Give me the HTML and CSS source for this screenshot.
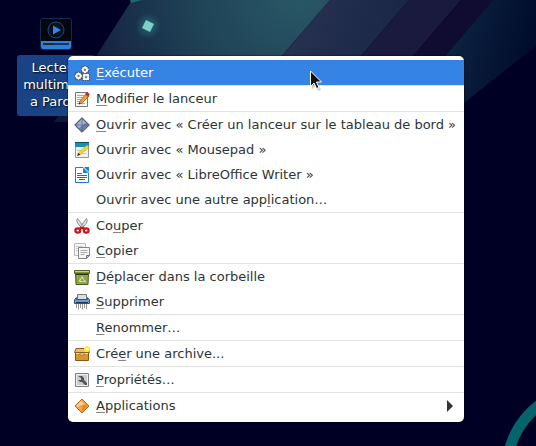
FILE: index.html
```html
<!DOCTYPE html>
<html lang="fr">
<head>
<meta charset="utf-8">
<title>Bureau</title>
<link rel="stylesheet" href="styles.css">
</head>
<body>
<main class="desktop">
  <svg class="wallpaper" viewBox="0 0 536 446" preserveAspectRatio="xMinYMin slice" aria-hidden="true">
    <defs>
      <radialGradient id="teal" gradientUnits="userSpaceOnUse" cx="300" cy="-10" r="230">
        <stop offset="0" stop-color="#2a5867"/><stop offset=".45" stop-color="#1f4457"/><stop offset=".8" stop-color="#182c48"/><stop offset="1" stop-color="#10183a"/>
      </radialGradient>
      <linearGradient id="slate" gradientUnits="userSpaceOnUse" x1="310" y1="0" x2="400" y2="30">
        <stop offset="0" stop-color="#26304f"/><stop offset="1" stop-color="#192747"/>
      </linearGradient>
      <linearGradient id="night" gradientUnits="userSpaceOnUse" x1="460" y1="30" x2="536" y2="50">
        <stop offset="0" stop-color="#0b2140"/><stop offset="1" stop-color="#000a2a"/>
      </linearGradient>
      <radialGradient id="glow"><stop offset="0" stop-color="#2f8d8d" stop-opacity=".6"/><stop offset="1" stop-color="#2f8d8d" stop-opacity="0"/></radialGradient>
    </defs>
    <path fill="#000024" d="M0 0h536v446H0z"/>
    <path fill="url(#teal)" d="M132 0h198L225 122H54z"/>
    <path fill="#20666e" d="M130 0h12l-11 3z"/>
    <path fill="url(#slate)" d="M330 0h79l-60 70h-79z"/>
    <path fill="#191a3d" d="M409 0h52l-60 70h-52z"/>
    <path fill="#100b31" d="M461 0h32l-60 70h-32z"/>
    <path fill="url(#night)" d="M493 0h43v46l-72 57-30 20V69z"/>
    <circle cx="148" cy="26" r="13" fill="url(#glow)"/>
    <path fill="#7ccfc8" d="M146 20l8 4-4 8-8-4z"/>
    <circle cx="588" cy="470" r="81" fill="none" stroke="#04636b" stroke-width="11"/>
  </svg>

  <a class="launcher" href="#parole">
    <svg class="launcher-icon" viewBox="0 0 32 32" aria-hidden="true">
      <rect x=".5" y=".5" width="31" height="31" rx="2" fill="#02060e" stroke="#102b52"/>
      <path fill="#2f7fdc" d="M1 23h30v6q0 2-2 2H3q-2 0-2-2z"/>
      <circle cx="16" cy="12" r="8" fill="#040f1f" stroke="#1b4a85"/>
      <path fill="#3584e4" d="M13 7.500l8 4.500-8 4.500z"/>
      <path fill="#123663" d="M3 25h26v2H3z"/><path fill="#282523" d="M3 25h11v2H3z"/>
    </svg>
    <span class="launcher-label">Lecteur multimédia Parole</span>
  </a>

  <div class="menu" role="menu">
    <div class="group">
      <button class="item active" role="menuitem">
        <svg class="icon" viewBox="0 0 16 16" aria-hidden="true"><g fill="#fff" stroke="#3c3f3e" stroke-width=".8"><path d="M11 .4l1.300 1.300h1.700v1.700L15.300 4.700 14 6v1.700h-1.700L11 9 9.700 7.700H8V6L6.700 4.700 8 3.400V1.700h1.700z"/><path d="M4.500 6.700L5.800 8h1.700v1.700L8.800 11l-1.300 1.300V14H5.800l-1.300 1.300L3.200 14H1.500v-1.700L.2 11l1.300-1.300V8h1.700z"/><path d="M8.600 8.600h6.900v6.900H8.600z" stroke-dasharray="2 .4"/></g><path fill="#8aa4c4" stroke="#444" stroke-width=".5" d="M10.200 4h1.500v1.500h-1.500zM3.700 10.200h1.500v1.500H3.700zM11.200 11.200h1.600v1.600h-1.600z"/></svg>
        <span><u>E</u>xécuter</span></button>
    </div>
    <div class="group">
      <button class="item" role="menuitem">
        <svg class="icon" viewBox="0 0 16 16" aria-hidden="true"><path fill="#f6f6f3" stroke="#777" d="M1.500 1.500h12v14h-12z"/><path stroke="#aaa" d="M3 4.500h7M3 6.500h6M3 8.500h4M3 10.500h3M3 12.500h8"/><path fill="#f2a03b" stroke="#8e4a18" stroke-width=".7" d="M5 13l1-3 6-7 3 2-7 7z"/><path fill="#d62222" d="M11 3l2-2 2.800 2L14 6z"/><path fill="#222" d="M4.500 13.500l1-2 1 1z"/></svg>
        <span><u>M</u>odifier le lanceur</span></button>
    </div>
    <div class="group">
      <button class="item" role="menuitem">
        <svg class="icon" viewBox="0 0 16 16" aria-hidden="true"><path fill="#6d81ad" stroke="#3b4661" d="M8 .7L15.300 8 8 15.300.7 8z"/><path fill="#a6b4d2" d="M8 2l4 4-7 5-3-3z"/><path stroke="#455475" stroke-width=".6" d="M2 8h12M8 2v12"/></svg>
        <span><u>O</u>uvrir avec « Créer un lanceur sur le tableau de bord »</span></button>
      <button class="item" role="menuitem">
        <svg class="icon" viewBox="0 0 16 16" aria-hidden="true"><path fill="#eef0f0" stroke="#999" d="M1.500.5h13v15h-13z"/><path fill="#1b8fb8" d="M1 0h14v5H1z"/><path fill="#084c68" d="M1 0h14v1H1z"/><path stroke="#c5c5c5" d="M3 8.500h9M3 11.500h9"/><path fill="#f6d91d" stroke="#b69a13" stroke-width=".5" d="M4 13l1-2.500L13 3l2 2-8.500 7.500z"/><path fill="#222" d="M3 14l1.500-3 1.700 1.700z"/></svg>
        <span>Ouvrir avec « Mousepad »</span></button>
      <button class="item" role="menuitem">
        <svg class="icon" viewBox="0 0 16 16" aria-hidden="true"><path fill="#fff" stroke="#1585c5" d="M1.500.5H9L14.500 6v9.500h-13z"/><path fill="#1585c5" d="M10 0h5v5zM9 1l5 5H9z"/><path stroke="#1673ac" d="M3 6.500h5M3 8.500h10M3 10.500h10M5 12.500h6"/></svg>
        <span>Ouvrir avec « LibreOffice Writer »</span></button>
      <button class="item" role="menuitem"><span class="icon"></span>
        <span>Ouvrir avec une autre app<u>l</u>ication…</span></button>
    </div>
    <div class="group">
      <button class="item" role="menuitem">
        <svg class="icon" viewBox="0 0 16 16" aria-hidden="true"><path fill="#e4e4e4" stroke="#777" stroke-width=".8" d="M3.500.5q-1.500 2 0 4.500l5 6 1.500-2zM12.500.5q1.500 2 0 4.500l-5 6L6 9z"/><g fill="#fff" stroke="#cf1219" stroke-width="2.200"><ellipse cx="3.800" cy="12.500" rx="2.400" ry="2.200"/><ellipse cx="12.200" cy="12.500" rx="2.400" ry="2.200"/><path fill="none" d="M5.500 11L8 9.500l2.500 1.500"/></g></svg>
        <span>Co<u>u</u>per</span></button>
      <button class="item" role="menuitem">
        <svg class="icon" viewBox="0 0 16 16" aria-hidden="true"><path fill="#f5f5f5" stroke="#bbb" d="M.5.5h11v12H.5z"/><path stroke="#ccc" d="M2 3.500h7M2 5.500h2M2 7.500h2"/><path fill="#f7f7f7" stroke="#858585" d="M4.500 4.500h11v8l-3 3h-8z"/><path stroke="#aaa" d="M6.500 7.500h7M6.500 9.500h7M6.500 11.500h4"/><path fill="#ccc" stroke="#777" d="M15.500 12.500h-3v3z"/></svg>
        <span><u>C</u>opier</span></button>
    </div>
    <div class="group">
      <button class="item" role="menuitem">
        <svg class="icon" viewBox="0 0 16 16" aria-hidden="true"><path fill="#91a54a" stroke="#4c5b22" d="M1.500 4.500h13l-.5 11H2z"/><path fill="#7f9440" stroke="#55642a" d="M.5 1.500h15v3H.5z"/><path stroke="#c3d28c" d="M1 2.500h14"/><path fill="#29300f" d="M2 5h12v1H2z"/><path fill="none" stroke="#e3eac2" stroke-width="1.200" stroke-dasharray="3 1" d="M8 8l3 4.500H5z"/></svg>
        <span><u>D</u>éplacer dans la corbeille</span></button>
      <button class="item" role="menuitem">
        <svg class="icon" viewBox="0 0 16 16" aria-hidden="true"><path fill="#ddd" stroke="#777" d="M3.500.5h9v5h-9z"/><path stroke="#999" d="M2.500 9v5M4.500 9v6.500M6.500 9v5M8.500 9v6.500M10.500 9v5M12.500 9v6"/><path fill="#6d9bd0" stroke="#2b5690" d="M.5 5.500l2-2v2h11v-2l2 2v4H.5z"/><path fill="#1c3659" d="M2 8h12v1H2z"/></svg>
        <span><u>S</u>upprimer</span></button>
    </div>
    <div class="group">
      <button class="item" role="menuitem"><span class="icon"></span><span><u>R</u>enommer…</span></button>
    </div>
    <div class="group">
      <button class="item" role="menuitem">
        <svg class="icon" viewBox="0 0 16 16" aria-hidden="true"><path fill="#d9952f" stroke="#8c5715" d="M1.500 6.500h13v8h-13z"/><path fill="#edbd69" stroke="#96611b" d="M2 2.500h12l1.500 4H.5z"/><path stroke="#ffe2a0" d="M2 7.500h12"/><path fill="#fff4cc" stroke="#80521d" stroke-width=".6" d="M6 7h4v2H6z"/><circle cx="13" cy="3" r="3" fill="#ffec32"/><circle cx="13" cy="3" r="1.300" fill="#fffde0"/></svg>
        <span>Cré<u>e</u>r une archive...</span></button>
    </div>
    <div class="group">
      <button class="item" role="menuitem">
        <svg class="icon" viewBox="0 0 16 16" aria-hidden="true"><path fill="#eee" stroke="#808285" d="M1.500 1.500h13v13h-13z"/><path fill="#ccc" d="M3 3h10v10H3z"/><path fill="#50575b" d="M4 4h4l2 2v2l3 3v2h-2L8 10H6L4 8h3V6z"/></svg>
        <span><u>P</u>ropriétés…</span></button>
    </div>
    <div class="group">
      <button class="item" role="menuitem" aria-haspopup="menu">
        <svg class="icon" viewBox="0 0 16 16" aria-hidden="true"><path fill="#f2a64c" stroke="#bf6414" d="M8 1l7 7-7 7-7-7z"/><path fill="#f9d09a" d="M7 3l3 3-7 3-1-1z"/><path fill="#e98b24" d="M8 8l4-2 2 2-6 6z"/></svg>
        <span><u>A</u>pplications</span>
        <svg class="arrow" viewBox="0 0 6 12" aria-hidden="true"><path fill="#2e3436" d="M0 0l6 6-6 6z"/></svg></button>
    </div>
  </div>

  <svg class="pointer" viewBox="0 0 14 21" aria-hidden="true"><path fill="#777" opacity=".35" d="M2 3v16l4-3 2 5 3-1-2-5h5z"/><path fill="#111" stroke="#fff" d="M.5 1v15.500l3.500-3.500 2.500 5.500 2.500-1-2.500-5.500h5z"/></svg>
</main>
</body>
</html>
```
FILE: styles.css
```css
* { box-sizing: border-box; }

body {
  margin: 0;
  background: #000024;
  color: #2e3436;
  font: 13px/17px "DejaVu Sans", sans-serif;
}

.desktop {
  position: relative;
  min-height: 100vh;
  overflow: hidden;
}

.wallpaper {
  position: absolute;
  inset: 0;
  width: 100%;
  height: 100%;
}

.launcher {
  position: absolute;
  left: 17px;
  top: 18px;
  width: 78px;
  display: flex;
  flex-direction: column;
  align-items: center;
  gap: 5px;
  color: #fff;
  text-decoration: none;
}

.launcher-icon {
  width: 32px;
  height: 32px;
}

.launcher-label {
  width: 100%;
  padding: 4px 4px 6px;
  border-radius: 3px;
  background: #1a4386;
  text-align: center;
  overflow-wrap: anywhere;
  text-shadow: 1px 1px 2px #000;
}

.menu {
  position: absolute;
  left: 68px;
  top: 56px;
  width: max-content;
  padding: 4px 0;
  border-radius: 5px;
  background: #fff;
  box-shadow: 0 0 2px #000;
}

.group + .group {
  border-top: 1px solid #e1e2e2;
}

.item {
  display: flex;
  align-items: center;
  gap: 6px;
  width: 100%;
  height: 25px;
  padding: 0 8px 0 6px;
  border: 0;
  background: none;
  color: inherit;
  font: inherit;
  text-align: left;
  white-space: nowrap;
}

.item.active {
  background: #3584e4;
  color: #fff;
}

.item u {
  text-decoration-color: #84888a;
  text-decoration-thickness: 1px;
  text-underline-offset: 2px;
  text-decoration-skip-ink: none;
}

.item.active u {
  text-decoration-color: #b5d2f5;
}

.icon {
  flex: none;
  width: 16px;
  height: 16px;
  fill: none;
}

.arrow {
  width: 6px;
  height: 12px;
  margin: 0 3px 0 auto;
}

.pointer {
  position: absolute;
  left: 310px;
  top: 70px;
  width: 14px;
  height: 21px;
}
```
